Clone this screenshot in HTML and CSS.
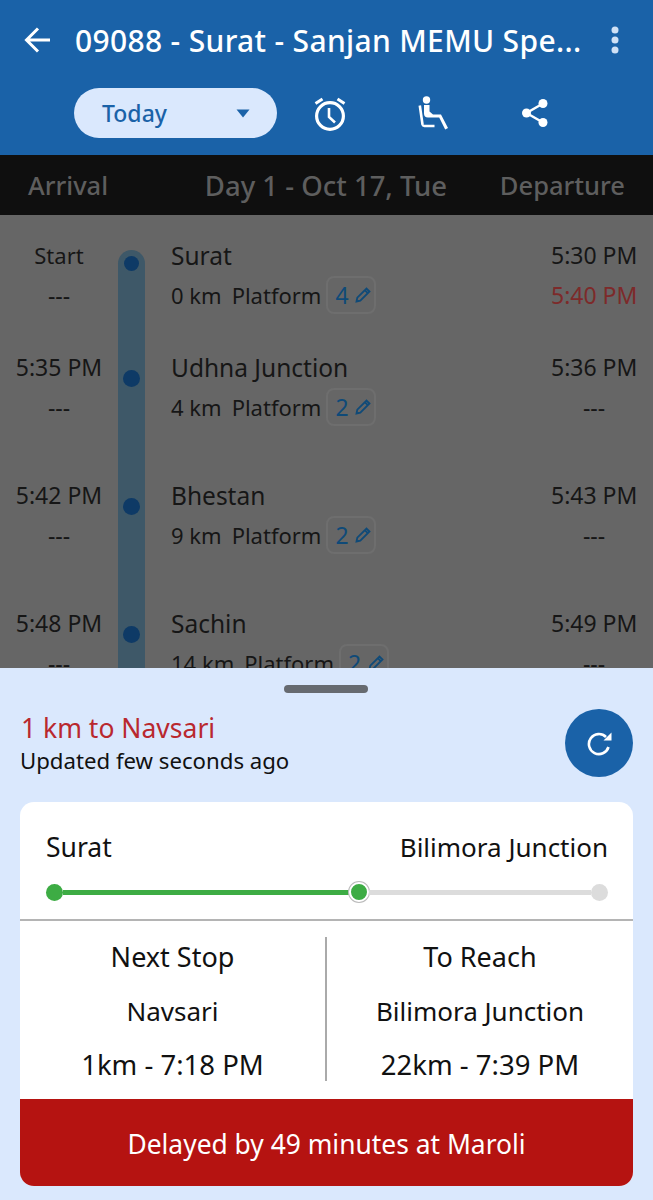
FILE: index.html
```html
<!DOCTYPE html>
<html lang="en">
<head>
    <meta charset="UTF-8">
    <meta name="viewport" content="width=device-width, initial-scale=1.0">
    <title>Train Status</title>
    <link rel="stylesheet" href="styles.css">
</head>
<body>
    <div class="screen">
        <header class="appbar">
            <div class="title-row">
                <svg class="back" viewBox="0 0 28 28" width="28" height="28"><path d="M26 14H3M14 2.5 2.5 14 14 25.5" fill="none" stroke="#fff" stroke-width="3"/></svg>
                <h1 class="title">09088 - Surat - Sanjan MEMU Spe...</h1>
                <svg class="more" viewBox="0 0 8 28" width="8" height="28"><circle cx="4" cy="4" r="3.5" fill="#cfe0f5"/><circle cx="4" cy="14" r="3.5" fill="#cfe0f5"/><circle cx="4" cy="24" r="3.5" fill="#cfe0f5"/></svg>
            </div>
            <div class="action-row">
                <div class="date-pill">
                    <span>Today</span>
                    <svg viewBox="0 0 14 9" width="14" height="9"><path d="M0.5 0.5h13L7 8.5z" fill="#1a62a8"/></svg>
                </div>
                <svg class="act-alarm" viewBox="0 0 36 36" width="36" height="36">
                    <circle cx="18" cy="21" r="13.4" fill="none" stroke="#fff" stroke-width="3.2"/>
                    <path d="M17 13v9l6 5.500" fill="none" stroke="#fff" stroke-width="2.600"/>
                    <path d="M3.500 8.500 10.500 4M32.500 8.500 25.500 4" fill="none" stroke="#fff" stroke-width="3"/>
                </svg>
                <svg class="act-seat" viewBox="0 0 32 36" width="32" height="36">
                    <circle cx="9.500" cy="5" r="3.700" fill="#fff"/>
                    <path d="M7 10h5.500v6.500l3.500 3h8l7 13.500-2.800 1.500-6-12H11a4 4 0 0 1-4-4z" fill="#fff"/>
                    <path d="M2.800 10.500 5.500 29.500a2 2 0 0 0 2 1.500h10" fill="none" stroke="#fff" stroke-width="2.600"/>
                </svg>
                <svg class="act-share" viewBox="0 0 26 28" width="26" height="28">
                    <path d="M21 4.500 4.500 14 21 23.500" fill="none" stroke="#fff" stroke-width="2.400"/>
                    <circle cx="21" cy="4.500" r="4.500" fill="#fff"/><circle cx="4.500" cy="14" r="4.500" fill="#fff"/><circle cx="21" cy="23.500" r="4.500" fill="#fff"/>
                </svg>
            </div>
        </header>

        <div class="day-bar">
            <span>Arrival</span>
            <span class="day-label">Day 1 - Oct 17, Tue</span>
            <span>Departure</span>
        </div>

        <main class="timeline">
            <div class="track"></div>

            <div class="stop stop-first">
                <div class="col-arr"><div class="start">Start</div><div>---</div></div>
                <div class="col-dot"><span class="dot small"></span></div>
                <div class="col-info">
                    <div class="name">Surat</div>
                    <div class="meta"><span class="km">0 km</span><span>Platform</span>
                        <span class="plat">4<svg viewBox="0 0 16 16" width="16" height="16"><path d="M1.500 14.500l.8-3.800L11.500 1.500l3 3-9.200 9.200zM9.800 3.200l3 3" fill="none" stroke="#0f4a78" stroke-width="1.800"/></svg></span>
                    </div>
                </div>
                <div class="col-dep"><div>5:30 PM</div><div class="late">5:40 PM</div></div>
            </div>

            <div class="stop">
                <div class="col-arr"><div>5:35 PM</div><div>---</div></div>
                <div class="col-dot"><span class="dot"></span></div>
                <div class="col-info">
                    <div class="name">Udhna Junction</div>
                    <div class="meta"><span class="km">4 km</span><span>Platform</span>
                        <span class="plat">2<svg viewBox="0 0 16 16" width="16" height="16"><path d="M1.500 14.500l.8-3.800L11.500 1.500l3 3-9.200 9.200zM9.800 3.200l3 3" fill="none" stroke="#0f4a78" stroke-width="1.800"/></svg></span>
                    </div>
                </div>
                <div class="col-dep"><div>5:36 PM</div><div>---</div></div>
            </div>

            <div class="stop">
                <div class="col-arr"><div>5:42 PM</div><div>---</div></div>
                <div class="col-dot"><span class="dot"></span></div>
                <div class="col-info">
                    <div class="name">Bhestan</div>
                    <div class="meta"><span class="km">9 km</span><span>Platform</span>
                        <span class="plat">2<svg viewBox="0 0 16 16" width="16" height="16"><path d="M1.500 14.500l.8-3.800L11.500 1.500l3 3-9.200 9.200zM9.800 3.200l3 3" fill="none" stroke="#0f4a78" stroke-width="1.800"/></svg></span>
                    </div>
                </div>
                <div class="col-dep"><div>5:43 PM</div><div>---</div></div>
            </div>

            <div class="stop">
                <div class="col-arr"><div>5:48 PM</div><div>---</div></div>
                <div class="col-dot"><span class="dot"></span></div>
                <div class="col-info">
                    <div class="name">Sachin</div>
                    <div class="meta"><span class="km">14 km</span><span>Platform</span>
                        <span class="plat">2<svg viewBox="0 0 16 16" width="16" height="16"><path d="M1.500 14.500l.8-3.800L11.500 1.500l3 3-9.200 9.200zM9.800 3.200l3 3" fill="none" stroke="#0f4a78" stroke-width="1.800"/></svg></span>
                    </div>
                </div>
                <div class="col-dep"><div>5:49 PM</div><div>---</div></div>
            </div>
        </main>

        <section class="sheet">
            <div class="handle"></div>
            <div class="status-row">
                <div class="status-text">
                    <div class="distance">1 km to Navsari</div>
                    <div class="updated">Updated few seconds ago</div>
                </div>
                <div class="refresh">
                    <svg viewBox="0 0 26 26" width="26" height="26"><path d="M22.500 17A10 10 0 1 1 20 7" fill="none" stroke="#fff" stroke-width="2.600"/><path d="M25.500 2.500v8h-8z" fill="#fff"/></svg>
                </div>
            </div>

            <div class="card">
                <div class="route">
                    <div class="route-names"><span class="route-from">Surat</span><span>Bilimora Junction</span></div>
                    <div class="progress">
                        <span class="prog-start"></span>
                        <span class="prog-done"></span>
                        <span class="prog-now"></span>
                        <span class="prog-left"></span>
                        <span class="prog-end"></span>
                    </div>
                </div>
                <div class="details">
                    <div class="detail-col">
                        <div>Next Stop</div>
                        <div class="detail-place">Navsari</div>
                        <div class="detail-time">1km - 7:18 PM</div>
                    </div>
                    <div class="detail-col">
                        <div>To Reach</div>
                        <div class="detail-place">Bilimora Junction</div>
                        <div class="detail-time">22km - 7:39 PM</div>
                    </div>
                </div>
                <div class="delay">Delayed by 49 minutes at Maroli</div>
            </div>
        </section>
    </div>
</body>
</html>
```

FILE: styles.css
```css
* {
    box-sizing: border-box;
}

body {
    margin: 0;
    font-family: 'Noto Sans', sans-serif;
    color: #111;
}

.screen {
    position: relative;
    width: 653px;
    height: 1200px;
    overflow: hidden;
    background: #666;
}

/* app bar */
.appbar {
    height: 155px;
    background: #1a62a8;
    padding: 21px 0 0 24px;
}

.title-row {
    display: flex;
    align-items: center;
    height: 38px;
}

.title {
    margin: 0 0 0 23px;
    font-size: 30px;
    font-weight: 500;
    letter-spacing: 0.33px;
    color: #fff;
    white-space: nowrap;
    width: 516px;
}

.more {
    margin-left: 20px;
}

.action-row {
    display: flex;
    align-items: center;
    margin-top: 29px;
    padding-left: 50px;
}

.date-pill {
    display: flex;
    align-items: center;
    justify-content: space-between;
    width: 203px;
    height: 50px;
    padding: 0 27px 0 28px;
    border-radius: 25px;
    background: #dae8fd;
    color: #1a62a8;
    font-size: 23px;
    font-weight: 500;
}

.act-alarm {
    margin-left: 35px;
}

.act-seat {
    margin-left: 69px;
}

.act-share {
    margin-left: 73px;
}

/* day header */
.day-bar {
    display: flex;
    justify-content: space-between;
    align-items: center;
    height: 60px;
    padding: 0 28px;
    background: #0f0f0f;
    color: #5e5e5e;
    font-size: 25.5px;
    font-weight: 500;
}

.day-label {
    margin-left: 44px;
    font-size: 27.5px;
}

/* stops */
.timeline {
    position: relative;
    height: 453px;
    overflow: hidden;
    font-size: 23px;
    color: #161616;
}

.track {
    position: absolute;
    left: 118px;
    top: 35px;
    width: 27px;
    height: 500px;
    border-radius: 14px 14px 0 0;
    background: #3e5868;
}

.stop {
    position: relative;
    display: flex;
    height: 128px;
}

.stop-first {
    height: 112px;
    margin-top: 26px;
}

.col-arr {
    width: 118px;
    margin-top: -1px;
    text-align: center;
}

.col-arr > div,
.col-dep > div {
    height: 40px;
    line-height: 30px;
}

.col-arr > .start {
    font-size: 22px;
}

.col-dot {
    width: 27px;
    display: flex;
    justify-content: center;
    align-items: flex-start;
    padding-top: 17px;
}

.dot {
    width: 17px;
    height: 17px;
    border-radius: 50%;
    background: #0e3a66;
}

.dot.small {
    width: 15px;
    height: 15px;
    margin-top: -2px;
}

.col-info {
    flex: 1;
    padding-left: 26px;
    font-size: 22px;
}

.name {
    font-size: 24.5px;
    line-height: 30px;
}

.meta {
    display: flex;
    align-items: center;
    margin-top: 5px;
    height: 38px;
}

.km {
    margin-right: 10px;
}

.plat {
    display: flex;
    align-items: center;
    justify-content: space-between;
    width: 50px;
    height: 38px;
    margin-left: 5px;
    padding: 0 3px 0 7px;
    border: 2px solid #6e6e6e;
    border-radius: 8px;
    color: #0f4a78;
    font-size: 23px;
}

.col-dep {
    width: 86px;
    margin: -1px 16px 0 0;
    text-align: center;
    white-space: nowrap;
}

.late {
    color: #7d2a2a;
}

/* bottom sheet */
.sheet {
    position: absolute;
    left: 0;
    right: 0;
    top: 668px;
    bottom: 0;
    background: #dae8fd;
    padding: 0 20px;
}

.handle {
    width: 84px;
    height: 8px;
    margin: 17px 0 0 264px;
    border-radius: 4px;
    background: #666a70;
}

.status-row {
    display: flex;
    justify-content: space-between;
    align-items: center;
    height: 68px;
    margin-top: 16px;
}

.status-text {
    margin-top: 2px;
}

.distance {
    font-size: 26.500px;
    line-height: 34px;
    color: #b9282f;
    margin-left: 1px;
}

.updated {
    font-size: 22.200px;
    line-height: 32px;
}

.refresh {
    display: flex;
    align-items: center;
    justify-content: center;
    width: 68px;
    height: 68px;
    border-radius: 50%;
    background: #1a62a8;
}

.card {
    margin-top: 25px;
    border-radius: 14px;
    overflow: hidden;
    background: #fff;
}

.route {
    height: 119px;
    padding: 28px 25px 0 26px;
    border-bottom: 2px solid #b4b4b4;
}

.route-names {
    display: flex;
    justify-content: space-between;
    font-size: 26px;
    line-height: 34px;
}

.route-from {
    font-size: 26.500px;
}

.progress {
    display: flex;
    align-items: center;
    margin-top: 19px;
    height: 18px;
}

.prog-start {
    width: 17px;
    height: 17px;
    border-radius: 50%;
    background: #3dac44;
}

.prog-done {
    width: 286px;
    height: 5px;
    background: #3dac44;
}

.prog-now {
    width: 20px;
    height: 20px;
    border-radius: 50%;
    background: #3dac44;
    border: 2px solid #fff;
    box-shadow: 0 0 0 1px #bbb;
}

.prog-left {
    flex: 1;
    height: 5px;
    background: #dcdcdc;
}

.prog-end {
    width: 17px;
    height: 17px;
    border-radius: 50%;
    background: #dcdcdc;
}

.details {
    display: flex;
    height: 178px;
    padding-top: 16px;
    font-size: 27px;
    text-align: center;
}

.detail-col {
    flex: 1;
    height: 144px;
}

.detail-col:first-child {
    flex: 0 0 307px;
    border-right: 2px solid #aaa;
}

.detail-col > div {
    height: 54px;
    line-height: 40px;
    white-space: nowrap;
}

.detail-col > .detail-place {
    font-size: 26px;
}

.detail-col > .detail-time {
    font-size: 27.500px;
}

.delay {
    height: 87px;
    padding-top: 25px;
    background: #b51311;
    color: #fff;
    font-size: 26.400px;
    line-height: 40px;
    text-align: center;
}
```
